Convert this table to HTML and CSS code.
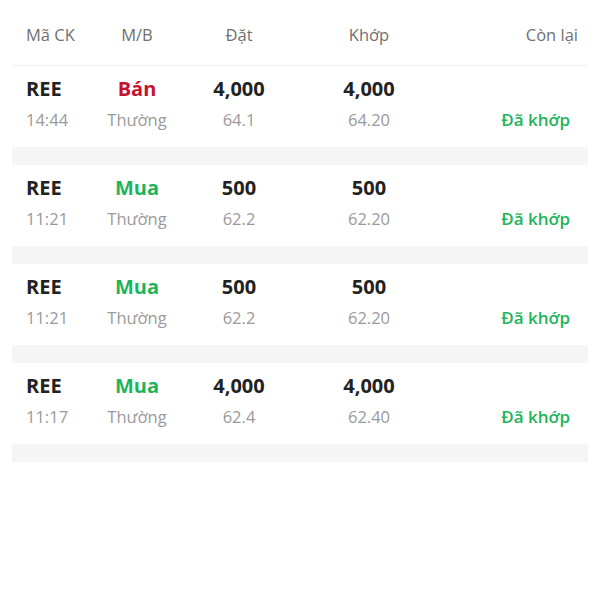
FILE: index.html
```html
<!DOCTYPE html>
<html lang="vi">
<head>
<meta charset="utf-8">
<link rel="stylesheet" href="styles.css">
</head>
<body>
<div class="page">
  <div class="head grid">
    <div class="c1">Mã CK</div>
    <div class="c2">M/B</div>
    <div class="c3">Đặt</div>
    <div class="c4">Khớp</div>
    <div class="c5">Còn lại</div>
  </div>
  <div class="list">
    <div class="card grid">
      <div class="c1 strong">REE</div>
      <div class="c2 strong sell">Bán</div>
      <div class="c3 strong">4,000</div>
      <div class="c4 strong">4,000</div>
      <div class="c5"></div>
      <div class="c1 sub">14:44</div>
      <div class="c2 sub">Thường</div>
      <div class="c3 sub">64.1</div>
      <div class="c4 sub">64.20</div>
      <div class="c5 sub status">Đã khớp</div>
    </div>
    <div class="card grid">
      <div class="c1 strong">REE</div>
      <div class="c2 strong buy">Mua</div>
      <div class="c3 strong">500</div>
      <div class="c4 strong">500</div>
      <div class="c5"></div>
      <div class="c1 sub">11:21</div>
      <div class="c2 sub">Thường</div>
      <div class="c3 sub">62.2</div>
      <div class="c4 sub">62.20</div>
      <div class="c5 sub status">Đã khớp</div>
    </div>
    <div class="card grid">
      <div class="c1 strong">REE</div>
      <div class="c2 strong buy">Mua</div>
      <div class="c3 strong">500</div>
      <div class="c4 strong">500</div>
      <div class="c5"></div>
      <div class="c1 sub">11:21</div>
      <div class="c2 sub">Thường</div>
      <div class="c3 sub">62.2</div>
      <div class="c4 sub">62.20</div>
      <div class="c5 sub status">Đã khớp</div>
    </div>
    <div class="card grid">
      <div class="c1 strong">REE</div>
      <div class="c2 strong buy">Mua</div>
      <div class="c3 strong">4,000</div>
      <div class="c4 strong">4,000</div>
      <div class="c5"></div>
      <div class="c1 sub">11:17</div>
      <div class="c2 sub">Thường</div>
      <div class="c3 sub">62.4</div>
      <div class="c4 sub">62.40</div>
      <div class="c5 sub status">Đã khớp</div>
    </div>
  </div>
</div>
</body>
</html>
```
FILE: styles.css
```css
html, body {
  margin: 0;
  padding: 0;
  background: #ffffff;
}
body {
  font-family: "Open Sans", "Noto Sans", sans-serif;
  color: #222222;
}
.page {
  width: 600px;
  padding: 0 12px;
  box-sizing: border-box;
}
.grid {
  display: grid;
  grid-template-columns: 74px 74px 130px 130px 1fr;
  align-items: center;
}
.c2, .c3, .c4 { text-align: center; }
.c5 { text-align: right; }
.head {
  padding: 23px 10px 18px 14px;
  font-size: 16.5px;
  line-height: 24px;
  color: #707070;
}
.list {
  border-top: 1px solid #f1f1f1;
}
.card {
  background: #ffffff;
  padding: 9px 18px 10px 14px;
  border-bottom: 18px solid #f5f5f5;
  grid-template-rows: 28px 34px;
}
.strong {
  font-size: 20px;
  font-weight: 700;
  line-height: 28px;
  color: #222222;
}
.sub {
  font-size: 16.5px;
  line-height: 34px;
  color: #9a9a9a;
}
.sell { color: #c4122f; }
.buy { color: #1db45a; }
.status {
  font-size: 17px;
  color: #1db45a;
  font-weight: 600;
}
```
